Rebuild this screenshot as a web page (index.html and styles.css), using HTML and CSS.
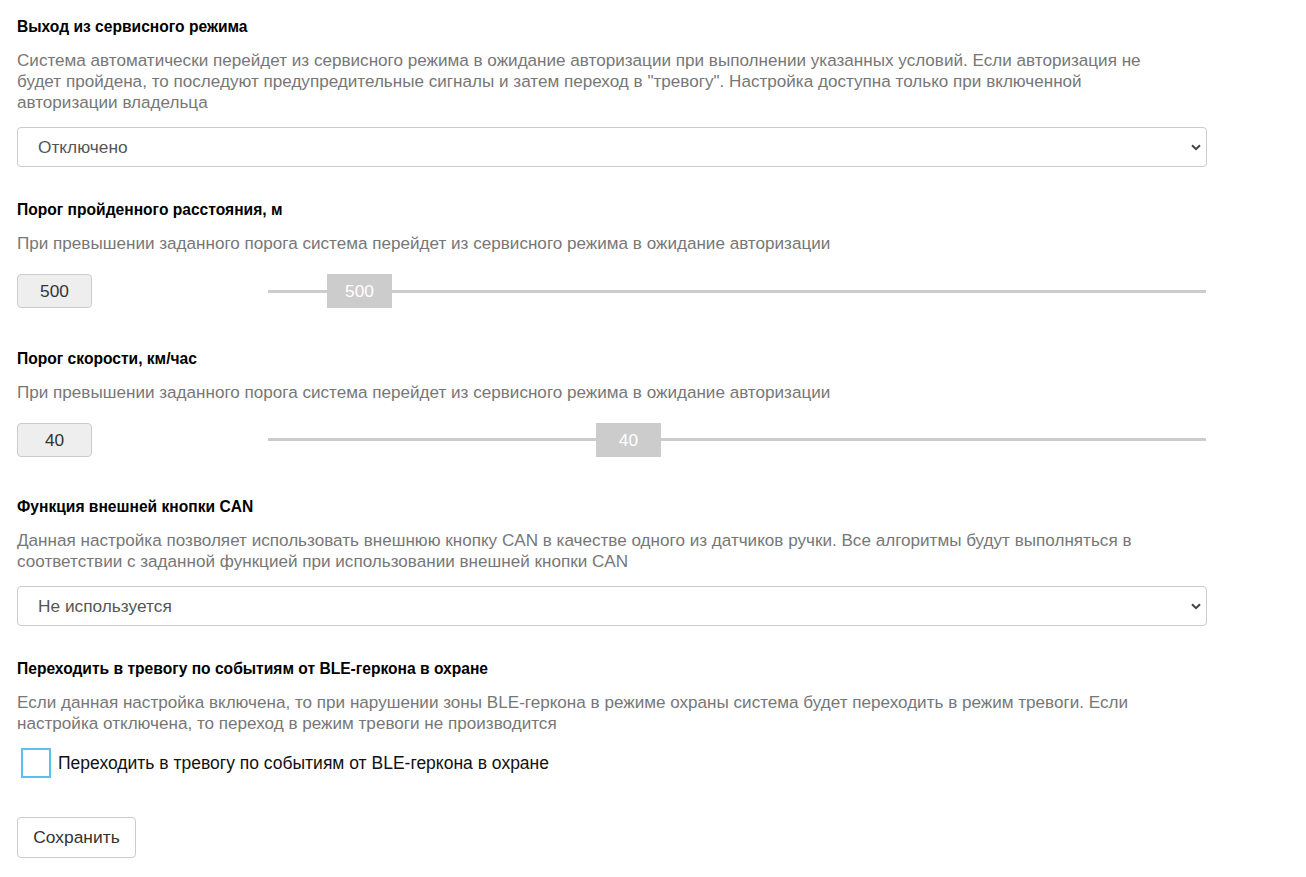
FILE: index.html
```html
<!DOCTYPE html>
<html lang="ru">
<head>
  <meta charset="UTF-8">
  <meta name="viewport" content="width=device-width, initial-scale=1.0">
  <title>Сервисный режим</title>
  <link rel="stylesheet" href="styles.css">
</head>
<body>
  <div class="container">
    <div class="field">
      <h3>Выход из сервисного режима</h3>
      <p class="hint">Система автоматически перейдет из сервисного режима в ожидание авторизации при выполнении указанных условий. Если авторизация не будет пройдена, то последуют предупредительные сигналы и затем переход в "тревогу". Настройка доступна только при включенной авторизации владельца</p>
      <div class="select-wrap">
        <select>
          <option>Отключено</option>
        </select>
        <svg class="chevron" width="10" height="7" viewBox="0 0 10 7"><path d="M1 1.2 L5 5.2 L9 1.2" fill="none" stroke="#444" stroke-width="2"/></svg>
      </div>
    </div>

    <div class="field">
      <h3>Порог пройденного расстояния, м</h3>
      <p class="hint">При превышении заданного порога система перейдет из сервисного режима в ожидание авторизации</p>
      <div class="range-row">
        <div class="num-box">500</div>
        <div class="slider">
          <div class="track"></div>
          <div class="thumb" style="--pos: 0.0676">500</div>
        </div>
      </div>
    </div>

    <div class="field">
      <h3>Порог скорости, км/час</h3>
      <p class="hint">При превышении заданного порога система перейдет из сервисного режима в ожидание авторизации</p>
      <div class="range-row">
        <div class="num-box">40</div>
        <div class="slider">
          <div class="track"></div>
          <div class="thumb" style="--pos: 0.3757">40</div>
        </div>
      </div>
    </div>

    <div class="field">
      <h3>Функция внешней кнопки CAN</h3>
      <p class="hint">Данная настройка позволяет использовать внешнюю кнопку CAN в качестве одного из датчиков ручки. Все алгоритмы будут выполняться в соответствии с заданной функцией при использовании внешней кнопки CAN</p>
      <div class="select-wrap">
        <select>
          <option>Не используется</option>
        </select>
        <svg class="chevron" width="10" height="7" viewBox="0 0 10 7"><path d="M1 1.2 L5 5.2 L9 1.2" fill="none" stroke="#444" stroke-width="2"/></svg>
      </div>
    </div>

    <div class="field">
      <h3>Переходить в тревогу по событиям от BLE-геркона в охране</h3>
      <p class="hint">Если данная настройка включена, то при нарушении зоны BLE-геркона в режиме охраны система будет переходить в режим тревоги. Если настройка отключена, то переход в режим тревоги не производится</p>
      <label class="check-row">
        <span class="check-box"></span>
        <span>Переходить в тревогу по событиям от BLE-геркона в охране</span>
      </label>
    </div>

    <button class="save-btn">Сохранить</button>
  </div>
</body>
</html>
```

FILE: styles.css
```css
* {
  box-sizing: border-box;
  margin: 0;
  padding: 0;
}

body {
  font-family: "Liberation Sans", Arial, sans-serif;
  font-size: 17.1px;
  line-height: 21px;
  color: #333;
  background: #fff;
}

.container {
  width: 1224px;
  padding: 16px 17px 18px 17px;
}

.field {
  margin-bottom: 32px;
}

.field h3 {
  font-size: 15.6px;
  font-weight: bold;
  color: #000;
  margin-bottom: 13px;
}

.hint {
  max-width: 1165px;
  color: #777;
  margin-bottom: 14px;
}

.select-wrap {
  position: relative;
  width: 1190px;
}

.select-wrap select {
  display: block;
  width: 100%;
  height: 40px;
  padding: 0 20px;
  font-family: inherit;
  font-size: 17.3px;
  color: #555;
  background: #fff;
  border: 1px solid #ccc;
  border-radius: 4px;
  appearance: none;
  -webkit-appearance: none;
}

.chevron {
  position: absolute;
  right: 6px;
  top: 17px;
  pointer-events: none;
}

.range-row {
  display: flex;
  align-items: center;
  margin-top: 20px;
  margin-bottom: 39.5px;
}

.num-box {
  width: 75px;
  height: 34px;
  line-height: 32px;
  font-size: 17.3px;
  text-align: center;
  color: #333;
  background: #eee;
  border: 1px solid #ccc;
  border-radius: 4px;
}

.slider {
  position: relative;
  flex: 1;
  height: 34px;
  margin-left: 176px;
  margin-right: 1px;
  display: flex;
  align-items: center;
}

.track {
  width: 100%;
  height: 3px;
  background: #ccc;
}

.thumb {
  position: absolute;
  top: 0;
  left: calc((100% - 65px) * var(--pos));
  width: 65px;
  height: 34px;
  line-height: 34px;
  font-size: 17.3px;
  text-align: center;
  color: #fff;
  background: #ccc;
}

.check-row {
  display: flex;
  align-items: center;
  gap: 7px;
  margin-top: 5.5px;
  padding-left: 4px;
  font-size: 17.5px;
  color: #111;
  margin-bottom: 38.5px;
}

.check-box {
  width: 30px;
  height: 30px;
  border: 2px solid #5bc0f0;
  background: #fff;
}

.save-btn {
  display: block;
  width: 119px;
  height: 41px;
  font-family: inherit;
  font-size: 17.4px;
  color: #333;
  background: #fff;
  border: 1px solid #ccc;
  border-radius: 4px;
}
```
